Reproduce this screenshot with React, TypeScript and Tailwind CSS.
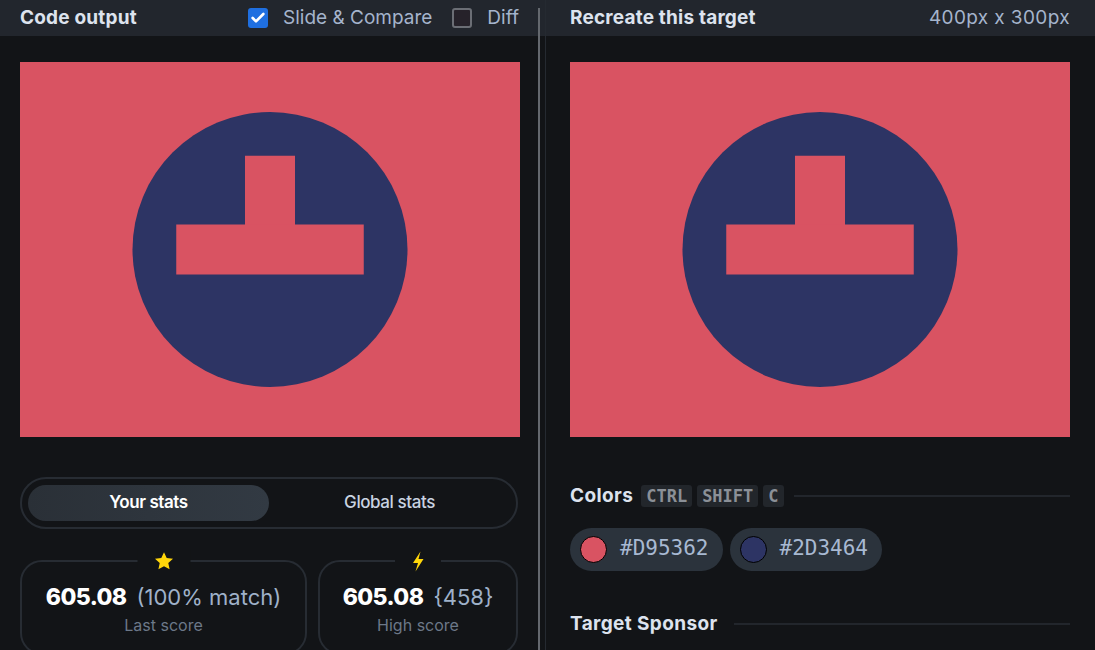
import { Check } from "lucide-react";

const FONT = { fontFamily: "Inter, 'Open Sans', sans-serif" };
const MONO = { fontFamily: "'DejaVu Sans Mono', 'Liberation Mono', monospace" };

function Target() {
  return (
    <svg width="500" height="375" viewBox="0 0 400 300" className="block shrink-0">
      <rect width="400" height="300" fill="#D95362" />
      <circle cx="200" cy="150" r="110" fill="#2D3464" />
      <rect x="180" y="75" width="40" height="56" fill="#D95362" />
      <rect x="125" y="130" width="150" height="40" fill="#D95362" />
    </svg>
  );
}

function Star() {
  return (
    <svg width="21" height="21" viewBox="0 0 24 24">
      <path d="M12 1.5l3.1 6.6 7.2.8-5.4 4.9 1.5 7.1L12 17.3l-6.4 3.6 1.5-7.1L1.7 8.9l7.2-.8z" fill="#ffd60a" />
    </svg>
  );
}

function Bolt() {
  return (
    <svg width="14" height="21" viewBox="0 0 14 21">
      <path d="M9.5 0.5L2 12h5L4.5 20.5 12.5 8h-5l2-7.5z" fill="#ffd60a" />
    </svg>
  );
}

function ScoreCard({ icon, main, extra, label, className }: { icon: React.ReactNode; main: string; extra: string; label: string; className: string }) {
  return (
    <div className={`relative border-2 border-[#272c33] rounded-[22px] pt-[18px] pb-4 flex flex-col items-center ${className}`}>
      <div className="absolute -top-[13px] left-1/2 -translate-x-1/2 bg-[#121417] px-[16px] flex items-center justify-center h-[24px]">
        {icon}
      </div>
      <div className="flex items-baseline gap-[10px]">
        <span className="text-[23px] font-extrabold text-white tracking-tight">{main}</span>
        <span className="text-[22px] text-[#9fb1c9]">{extra}</span>
      </div>
      <span className="text-[16px] text-[#6c7888] -mt-[2px]">{label}</span>
    </div>
  );
}

function Kbd({ children }: { children: string }) {
  return (
    <span className="bg-[#22262b] text-[#8b9097] text-[17px] font-bold px-[5px] h-[22px] flex items-center rounded-[3px]" style={MONO}>
      {children}
    </span>
  );
}

function ColorPill({ hex }: { hex: string }) {
  return (
    <div className="flex items-center bg-[#2b333c] rounded-full h-[43px] pl-[10px] pr-[14px] gap-[13px]">
      <span className="w-[27px] h-[27px] rounded-full border border-black" style={{ background: hex }} />
      <span className="text-[21px] text-[#a8b9d2]" style={MONO}>{hex}</span>
    </div>
  );
}

export default function App() {
  return (
    <div className="w-[1095px] h-[650px] flex bg-[#121417] overflow-hidden" style={FONT}>
      {/* Left: code output */}
      <div className="w-[538px] shrink-0 flex flex-col">
        <div className="h-[36px] shrink-0 bg-[#22262d] flex items-center pl-5 pr-[19px]">
          <span className="text-[19px] font-bold text-[#dde3ee] tracking-[0.01em]">Code output</span>
          <div className="ml-auto flex items-center">
            <span className="w-5 h-5 rounded-[3px] bg-[#1f6fe0] flex items-center justify-center">
              <Check className="w-4 h-4 text-white" strokeWidth={4} />
            </span>
            <span className="ml-[15px] text-[19px] text-[#a5b4cc]">Slide &amp; Compare</span>
            <span className="ml-5 w-5 h-5 rounded-[3px] bg-[#26222a] border-2 border-[#6b6e75]" />
            <span className="ml-[15px] text-[19px] text-[#a5b4cc]">Diff</span>
          </div>
        </div>
        <div className="px-5 pt-[26px]">
          <Target />
          <div className="mt-[40px] h-[52px] rounded-full border-2 border-[#272c33] flex items-center p-[6px]">
            <div className="w-[241px] h-[36px] rounded-full bg-gradient-to-r from-[#2a3037] to-[#323a43] flex items-center justify-center text-[17px] font-semibold text-white tracking-tight">
              Your stats
            </div>
            <div className="flex-1 flex items-center justify-center text-[17px] font-medium text-[#c9d3e1] tracking-tight">
              Global stats
            </div>
          </div>
          <div className="mt-[31px] flex gap-[11px]">
            <ScoreCard className="w-[287px]" icon={<Star />} main="605.08" extra="(100% match)" label="Last score" />
            <ScoreCard className="w-[200px]" icon={<Bolt />} main="605.08" extra="{458}" label="High score" />
          </div>
        </div>
      </div>

      {/* Divider */}
      <div className="relative w-[7px] shrink-0 flex flex-col">
        <div className="h-[36px] shrink-0 bg-[#22262d]" />
        <div className="absolute left-0 top-[8px] bottom-0 w-[2px] bg-[#64686e]" />
      </div>

      {/* Right: target */}
      <div className="flex-1 flex flex-col border-l border-[#252a31]">
        <div className="h-[36px] shrink-0 bg-[#22262d] flex items-center pl-[24px] pr-[25px]">
          <span className="text-[19px] font-bold text-[#dde3ee] tracking-[0.01em]">Recreate this target</span>
          <span className="ml-auto text-[19px] text-[#a5b4cc] tracking-[0.02em]">400px x 300px</span>
        </div>
        <div className="pl-[24px] pr-[25px] pt-[26px]">
          <Target />
          <div className="mt-[45px] flex items-center">
            <span className="text-[19px] font-bold text-[#dde3ee] tracking-[0.02em]">Colors</span>
            <div className="ml-[8px] flex gap-[5px]">
              <Kbd>CTRL</Kbd>
              <Kbd>SHIFT</Kbd>
              <Kbd>C</Kbd>
            </div>
            <div className="ml-[10px] flex-1 h-[2px] bg-[#22262c]" />
          </div>
          <div className="mt-[17px] flex gap-[7px]">
            <ColorPill hex="#D95362" />
            <ColorPill hex="#2D3464" />
          </div>
          <div className="mt-[39px] flex items-center">
            <span className="text-[19px] font-bold text-[#dde3ee] tracking-[0.02em]">Target Sponsor</span>
            <div className="ml-[16px] flex-1 h-[2px] bg-[#22262c]" />
          </div>
        </div>
      </div>
    </div>
  );
}
